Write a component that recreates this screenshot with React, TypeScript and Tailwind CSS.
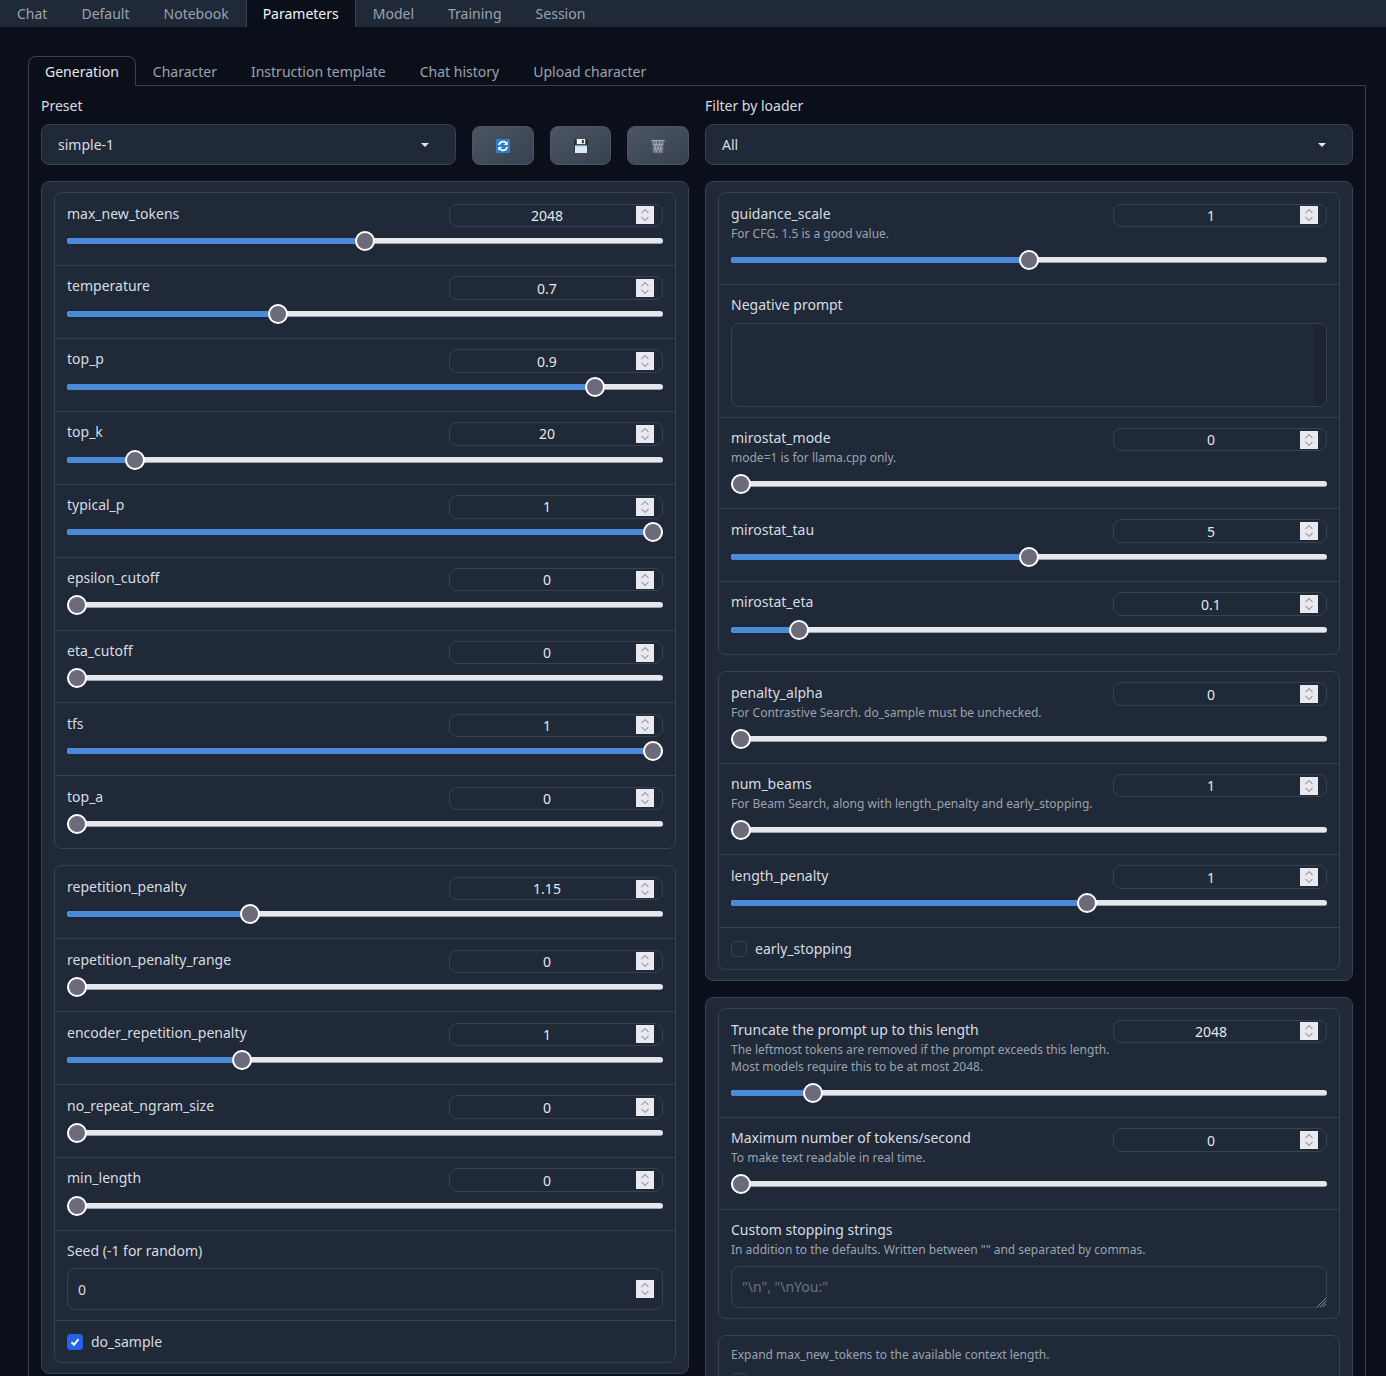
const mainTabs = ["Chat", "Default", "Notebook", "Parameters", "Model", "Training", "Session"];
const subTabs = ["Generation", "Character", "Instruction template", "Chat history", "Upload character"];

interface SliderRowProps {
  label: string;
  value: string;
  pct: number;
  info?: string[];
  first?: boolean;
}

function Stepper() {
  return (
    <svg width="18" height="18" viewBox="0 0 18 18" className="shrink-0">
      <rect width="18" height="18" fill="#e9e9ef" />
      <path d="M5.500 7 9 3.500 12.500 7M5.500 11 9 14.500 12.500 11" fill="none" stroke="#a3a3ae" strokeWidth="1.200" />
    </svg>
  );
}

function NumberBox({ value }: { value: string }) {
  return (
    <div className="flex h-[23.5px] w-[214px] shrink-0 items-center rounded-lg border border-[#374151] px-2 text-[14px] text-[#e5e7eb]">
      <span className="flex-1 text-center">{value}</span>
      <Stepper />
    </div>
  );
}

function Track({ pct }: { pct: number }) {
  return (
    <div className="relative flex h-5 items-center">
      <div className="h-[6px] w-full rounded-full border-b border-[#9ca3af] bg-[#e5e7eb]" />
      <div
        className="absolute left-0 h-[6px] rounded-l-full bg-[#4a8ad8]"
        style={{ width: `calc(10px + (100% - 20px) * ${pct / 100})` }}
      />
      <div
        className="absolute h-5 w-5 rounded-full border-2 border-white bg-[#6b6b7b]"
        style={{ left: `calc((100% - 20px) * ${pct / 100})` }}
      />
    </div>
  );
}

function SliderRow({ label, value, pct, info, first }: SliderRowProps) {
  const gap = !info ? "mb-[3.85px]" : info.length > 1 ? "mb-[8.4px]" : "mb-[7.95px]";
  const bottom = !info ? "pb-[14.3px]" : info.length > 1 ? "pb-[14px]" : "pb-[14.2px]";
  return (
    <div className={`px-3 pt-[10.25px] ${bottom} ${first ? "" : "border-t border-[#374151]"}`}>
      <div className={`flex justify-between ${gap}`}>
        <div className="min-w-0 pt-[0.1px]">
          <div className="h-[21px] text-[14px] leading-[20px] text-[#d8dce2]">{label}</div>
          {info?.map((line) => (
            <div key={line} className="whitespace-nowrap text-[12px] leading-[17px] text-[#9ca3af]">
              {line}
            </div>
          ))}
        </div>
        <NumberBox value={value} />
      </div>
      <Track pct={pct} />
    </div>
  );
}

function CheckRow({ label, checked }: { label: string; checked?: boolean }) {
  return (
    <div className="flex h-[42px] items-center gap-2 border-t border-[#374151] px-3 text-[14px] text-[#d8dce2]">
      {checked ? (
        <div className="flex h-4 w-4 items-center justify-center rounded-[4px] bg-[#2563eb]">
          <svg width="12" height="12" viewBox="0 0 12 12">
            <path d="M2.500 6.200 5 8.800 9.500 3.200" fill="none" stroke="#fff" strokeWidth="2" />
          </svg>
        </div>
      ) : (
        <div className="h-4 w-4 rounded-[4px] border border-[#374151] bg-[#1f2937]" />
      )}
      <span>{label}</span>
    </div>
  );
}

function Dropdown({ value }: { value: string }) {
  return (
    <div className="flex h-[41px] flex-1 items-center justify-between rounded-lg border border-[#374151] bg-[#1f2937] pl-4 pr-[26px] text-[14px] text-[#d8dce2]">
      <span>{value}</span>
      <svg width="8" height="4" viewBox="0 0 8 4">
        <path d="M0 0h8L4 4z" fill="#e5e7eb" />
      </svg>
    </div>
  );
}

function IconButton({ width, children }: { width: string; children: React.ReactNode }) {
  return (
    <div
      className={`flex h-[39px] ${width} shrink-0 items-center justify-center rounded-lg border border-[#4b5563] bg-gradient-to-br from-[#4b5563] to-[#374151]`}
    >
      {children}
    </div>
  );
}

function Box({ children }: { children: React.ReactNode }) {
  return <div className="overflow-hidden rounded-lg border border-[#374151] bg-[#1f2937] pt-[0.25px]">{children}</div>;
}

function Panel({ children }: { children: React.ReactNode }) {
  return (
    <div className="flex flex-col gap-4 rounded-lg border border-[#374151] bg-[#1f2937] px-3 py-2.5">{children}</div>
  );
}

export default function App() {
  return (
    <div className="h-[1376px] overflow-hidden bg-[#0b0f19] font-['Noto_Sans',sans-serif]">
      <div className="flex h-[27px] bg-[#1f2937] text-[14px] text-[#9ca3af]">
        {mainTabs.map((tab) => (
          <div
            key={tab}
            className={`flex items-center border-x px-4 ${
              tab === "Parameters" ? "border-[#374151] bg-[#0b0f19] text-[#f3f4f6]" : "border-transparent"
            }`}
          >
            {tab}
          </div>
        ))}
      </div>

      <div className="pl-7 pr-5 pt-[29px]">
        <div className="relative z-10 flex h-[30px] text-[14px] text-[#9ca3af]">
          {subTabs.map((tab) => (
            <div
              key={tab}
              className={`flex items-center rounded-t-lg border-x border-t px-4 ${
                tab === "Generation" ? "border-[#374151] bg-[#0b0f19] text-[#e5e7eb]" : "border-transparent"
              }`}
            >
              {tab}
            </div>
          ))}
        </div>

        <div className="-mt-px border border-[#374151] px-3 pt-2.5">
          <div className="grid grid-cols-2 gap-4">
            <div>
              <div className="mb-2 h-5 text-[14px] leading-5 text-[#d8dce2]">Preset</div>
              <div className="flex items-end gap-4">
                <Dropdown value="simple-1" />
                <IconButton width="w-[62px]">
                  <svg width="14" height="14" viewBox="0 0 15 15">
                    <rect width="15" height="15" fill="#2f7fc8" />
                    <path
                      d="M3 6.500A4.700 4.700 0 0 1 10.800 4.200M12 8.500A4.700 4.700 0 0 1 4.200 10.800"
                      fill="none"
                      stroke="#fff"
                      strokeWidth="1.800"
                    />
                    <path d="M12.500 2.300v4h-4zM2.500 12.700v-4h4z" fill="#fff" />
                  </svg>
                </IconButton>
                <IconButton width="w-[61px]">
                  <svg width="14" height="14" viewBox="0 0 15 15">
                    <rect width="15" height="15" rx="1" fill="#2b303a" />
                    <rect x="3" y="0" width="9" height="5.500" fill="#f3f4f6" />
                    <rect x="8.500" y="1" width="2" height="3.500" fill="#2b303a" />
                    <rect x="1" y="7" width="13" height="8" fill="#dfe9f5" />
                    <rect x="1" y="7" width="13" height="1" fill="#8fc3ee" />
                  </svg>
                </IconButton>
                <IconButton width="w-[62px]">
                  <svg width="14" height="14" viewBox="0 0 15 15">
                    <path d="M0.500 1h14l-1.500 14H2z" fill="#5f6975" />
                    <path d="M0.500 1h14v1.500H0.500z" fill="#a3abb4" />
                    <path
                      d="M2.500 3 4.500 9 3.500 14.500M6 3 4.500 9 6 14.500M5 3 7.500 9 5.500 14.500M10 3 7.500 9 9.500 14.500M9 3 10.500 9 9 14.500M12.500 3 10.500 9 11.500 14.500M2 6h11M2.500 10h10"
                      fill="none"
                      stroke="#a7afb8"
                      strokeWidth="0.800"
                    />
                  </svg>
                </IconButton>
              </div>
            </div>
            <div>
              <div className="mb-2 h-5 text-[14px] leading-5 text-[#d8dce2]">Filter by loader</div>
              <div className="flex">
                <Dropdown value="All" />
              </div>
            </div>
          </div>

          <div className="mt-4 grid grid-cols-2 items-start gap-4">
            <Panel>
              <Box>
                <SliderRow first label="max_new_tokens" value="2048" pct={50} />
                <SliderRow label="temperature" value="0.7" pct={34.9} />
                <SliderRow label="top_p" value="0.9" pct={89.9} />
                <SliderRow label="top_k" value="20" pct={10} />
                <SliderRow label="typical_p" value="1" pct={100} />
                <SliderRow label="epsilon_cutoff" value="0" pct={0} />
                <SliderRow label="eta_cutoff" value="0" pct={0} />
                <SliderRow label="tfs" value="1" pct={100} />
                <SliderRow label="top_a" value="0" pct={0} />
              </Box>
              <Box>
                <SliderRow first label="repetition_penalty" value="1.15" pct={30} />
                <SliderRow label="repetition_penalty_range" value="0" pct={0} />
                <SliderRow label="encoder_repetition_penalty" value="1" pct={28.6} />
                <SliderRow label="no_repeat_ngram_size" value="0" pct={0} />
                <SliderRow label="min_length" value="0" pct={0} />
                <div className="border-t border-[#374151] px-3 py-2.5">
                  <div className="mb-[7.5px] h-5 text-[14px] leading-5 text-[#d8dce2]">Seed (-1 for random)</div>
                  <div className="flex h-[42px] items-center justify-between rounded-lg border border-[#374151] pl-2.5 pr-2 text-[14px] text-[#d8dce2]">
                    <span>0</span>
                    <Stepper />
                  </div>
                </div>
                <CheckRow checked label="do_sample" />
              </Box>
            </Panel>

            <div className="flex flex-col gap-4">
              <Panel>
                <Box>
                  <SliderRow first label="guidance_scale" value="1" pct={50} info={["For CFG. 1.5 is a good value."]} />
                  <div className="border-t border-[#374151] px-3 py-2.5">
                    <div className="mb-2 h-5 text-[14px] leading-5 text-[#d8dce2]">Negative prompt</div>
                    <div className="flex h-[84px] justify-end overflow-hidden rounded-lg border border-[#374151]">
                      <div className="w-[12px] bg-[#1e2530]" />
                    </div>
                  </div>
                  <SliderRow label="mirostat_mode" value="0" pct={0} info={["mode=1 is for llama.cpp only."]} />
                  <SliderRow label="mirostat_tau" value="5" pct={50} />
                  <SliderRow label="mirostat_eta" value="0.1" pct={10} />
                </Box>
                <Box>
                  <SliderRow
                    first
                    label="penalty_alpha"
                    value="0"
                    pct={0}
                    info={["For Contrastive Search. do_sample must be unchecked."]}
                  />
                  <SliderRow
                    label="num_beams"
                    value="1"
                    pct={0}
                    info={["For Beam Search, along with length_penalty and early_stopping."]}
                  />
                  <SliderRow label="length_penalty" value="1" pct={60} />
                  <CheckRow label="early_stopping" />
                </Box>
              </Panel>

              <Panel>
                <Box>
                  <SliderRow
                    first
                    label="Truncate the prompt up to this length"
                    value="2048"
                    pct={12.5}
                    info={[
                      "The leftmost tokens are removed if the prompt exceeds this length.",
                      "Most models require this to be at most 2048.",
                    ]}
                  />
                  <SliderRow
                    label="Maximum number of tokens/second"
                    value="0"
                    pct={0}
                    info={["To make text readable in real time."]}
                  />
                  <div className="border-t border-[#374151] px-3 py-2.5">
                    <div className="h-[21px] text-[14px] leading-5 text-[#d8dce2]">Custom stopping strings</div>
                    <div className="mb-[8.5px] text-[12px] leading-[17px] text-[#9ca3af]">
                      In addition to the defaults. Written between "" and separated by commas.
                    </div>
                    <div className="relative flex h-[42px] items-center rounded-lg border border-[#374151] pl-2.5 text-[14px] text-[#6b7280]">
                      <span className="-mt-0.5">{'"\\n", "\\nYou:"'}</span>
                      <svg width="9" height="9" viewBox="0 0 9 9" className="absolute bottom-0 right-0">
                        <path d="M0 9 9 0M3 9l6-6M6 9l3-3" fill="none" stroke="#9ca3af" strokeWidth="0.800" />
                      </svg>
                    </div>
                  </div>
                </Box>
                <Box>
                  <div className="px-3 pt-2.5">
                    <div className="mb-[10px] text-[12px] leading-[17px] text-[#9ca3af]">
                      Expand max_new_tokens to the available context length.
                    </div>
                    <div className="h-4 w-4 rounded-[4px] border border-[#374151]" />
                  </div>
                </Box>
              </Panel>
            </div>
          </div>
        </div>
      </div>
    </div>
  );
}
